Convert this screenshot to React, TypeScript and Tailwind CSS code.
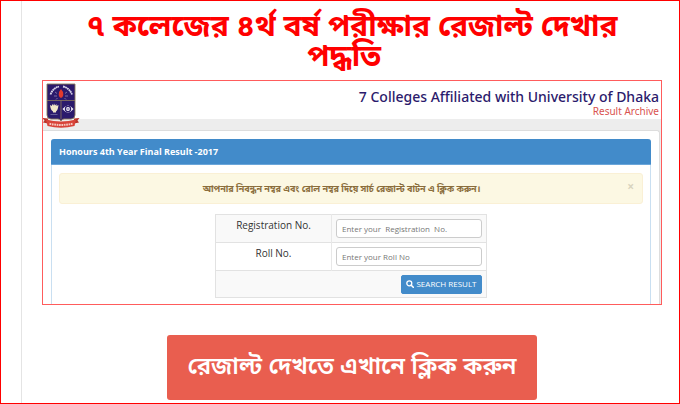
import React from "react";

function Crest() {
  return (
    <svg viewBox="0 0 38 45" className="h-[45px] w-[38px]" role="img" aria-label="University of Dhaka crest">
      <path d="M5 1h28v31q0 4-4 4h-7q-2 0-3 2q-1-2-3-2H9q-4 0-4-4z" fill="#2b1a6c" stroke="#8d7a5c" strokeWidth="0.9" />
      <path d="M5 17.5h28M19 17.5v19" stroke="#8d7a5c" strokeWidth="0.8" fill="none" />
      <path d="M8.500 11.500Q11 5 17 3.500" stroke="#d8d4e8" strokeWidth="1.800" strokeDasharray="1.8 0.4" fill="none" />
      <path d="M21 3.500Q27.500 5 30 11.500" stroke="#d8d4e8" strokeWidth="1.800" strokeDasharray="1.8 0.4" fill="none" />
      <path d="M13 9l2 1.500M25 9l-2 1.500M12 13h3M23 13h3M14 16.500l1.500-1.500M24 16.500l-1.500-1.500" stroke="#9c95c2" strokeWidth="0.700" />
      <path d="M19 6q3 3 2.300 6q-0.600 3-2.300 3q-1.700 0-2.300-3q-0.500-3 2.300-6z" fill="#e23a2d" />
      <path d="M8 22l2 1v-2l1.500 1.500L12 20.500l1 2l1.500-1.500v2l2-1q-0.500 5-2.500 6.500v1h-3v-1Q8.500 27 8 22z" fill="#f1e6c8" />
      <path d="M8.500 31.500h7" stroke="#756ca2" strokeWidth="0.800" />
      <path d="M20.500 26q5.500-7 11 0q-5.500 7-11 0z" fill="#f5f3fa" />
      <circle cx="26" cy="26" r="2.600" fill="#fff" stroke="#2b1a6c" strokeWidth="1.200" />
      <path d="M24.500 26h3" stroke="#2b1a6c" strokeWidth="0.800" />
      <path d="M0.500 35l5.500 0.500v5l-5-1l1.500-2zM37.500 35l-5.500 0.500v5l5-1l-1.500-2z" fill="#b9352a" />
      <path d="M4 36.500q15 4 30 0l-1.500 6.500q-13.500 3.500-27 0z" fill="#d8443a" />
      <path d="M7.500 40.700q11.500 2.500 23 0" stroke="#f6c8bf" strokeWidth="2" strokeDasharray="1.700 0.700" fill="none" />
    </svg>
  );
}

function SearchIcon() {
  return (
    <svg viewBox="0 0 8 8" className="h-2 w-2" aria-hidden="true" fill="none" stroke="currentColor">
      <circle cx="3.300" cy="3.300" r="2.500" strokeWidth="1.300" />
      <path d="M5.200 5.200l2.100 2.100" strokeWidth="1.600" strokeLinecap="round" />
    </svg>
  );
}

function Field({ id, label, placeholder }: { id: string; label: string; placeholder: string }) {
  return (
    <tr className="h-7 border-b border-[#e2e2e2] odd:bg-[#f9f9f9]">
      <th scope="row" className="w-[116px] border-r border-[#e8e8e8] p-0 pt-[2px] align-top text-[10px] leading-4 font-medium text-[#333333]">
        <label htmlFor={id}>{label}</label>
      </th>
      <td className="px-1 py-0 align-middle">
        <input
          id={id}
          type="text"
          placeholder={placeholder}
          className="block h-[19px] w-full rounded-[3px] border border-[#cccccc] bg-white px-[5px] text-[8px] whitespace-pre text-[#555555] placeholder:text-[#777777]"
        />
      </td>
    </tr>
  );
}

function ResultArchive() {
  return (
    <section className="flex h-[225px] flex-col overflow-hidden border border-[#ff5c5c] bg-[#ededed] font-['Open_Sans','Noto_Sans_Bengali','Noto_Sans',sans-serif]">
      <header className="flex h-[38px] shrink-0 items-start justify-between bg-white pr-[2px] font-['Noto_Sans',sans-serif]">
        <div className="-ml-px pt-[2px]">
          <Crest />
        </div>
        <div className="pt-2 text-right">
          <h2 className="text-[14px] leading-4 font-medium text-[#2b1a6c]">7 Colleges Affiliated with University of Dhaka</h2>
          <p className="text-[10px] leading-3 text-[#d9534f]">Result Archive</p>
        </div>
      </header>
      <div className="mt-[11px] mr-px grow rounded-tr-[3px] border-t border-r border-[#dddddd] bg-white px-2 pt-2">
        <div className="h-full rounded-t-[3px] border-x border-[#c9dff1]">
          <h3 className="-mx-px h-[26px] rounded-t-[3px] border-b border-[#6ba6da] bg-[#428bca] px-2 text-[9px] leading-[25px] font-bold text-white">
            Honours 4th Year Final Result -2017
          </h3>
          <div className="mx-[7px] mt-2 flex h-[31px] items-center rounded-[3px] border border-[#faf0d5] bg-[#fcf8e3] px-2 text-[#8a6d3b]">
            <p className="grow pr-3 text-center text-[9px] font-bold">
              আপনার নিবন্ধন নম্বর এবং রোল নম্বর দিয়ে সার্চ রেজাল্ট বাটন এ ক্লিক করুন।
            </p>
            <button type="button" aria-label="Close" className="pb-1 text-[12px] leading-4 font-bold text-[#d9d4bf]">
              ×
            </button>
          </div>
          <form onSubmit={(e) => e.preventDefault()}>
            <table className="mx-auto mt-[10px] w-[272px] table-fixed border-collapse border border-[#e2e2e2]">
              <tbody>
                <Field id="registration" label="Registration No." placeholder="Enter your  Registration  No." />
                <Field id="roll" label="Roll No." placeholder="Enter your Roll No" />
                <tr className="h-[27px] bg-[#f9f9f9]">
                  <td colSpan={2} className="px-1 py-0 align-middle">
                    <button
                      type="submit"
                      className="ml-auto flex h-[19px] w-[81px] items-center justify-center gap-[2px] rounded-[2px] border border-[#428bca] bg-[#428bca] text-[8px] whitespace-nowrap text-white"
                    >
                      <SearchIcon />
                      SEARCH RESULT
                    </button>
                  </td>
                </tr>
              </tbody>
            </table>
          </form>
        </div>
      </div>
    </section>
  );
}

export default function App() {
  return (
    <div className="flex min-h-screen border border-[#ff0000] bg-white">
      <div className="w-5 shrink-0" />
      <main className="min-w-0 grow border-l border-[#e4e4e4] pr-[17px] pl-5 font-['Noto_Sans_Bengali','Noto_Sans',sans-serif]">
        <h1 className="px-8 pt-3 pb-[7px] text-center text-[30px] leading-[30px] font-bold text-[#ff0000]">
          ৭ কলেজের ৪র্থ বর্ষ পরীক্ষার রেজাল্ট দেখার পদ্ধতি{"\u00a0\u00a0"}
        </h1>
        <ResultArchive />
        <div className="flex justify-center pt-[30px]">
          <a href="#result" className="rounded-[3px] bg-[#e95e4f] px-5 pt-[2px] text-[24px] leading-[63px] font-semibold text-white">
            রেজাল্ট দেখতে এখানে ক্লিক করুন
          </a>
        </div>
      </main>
    </div>
  );
}
